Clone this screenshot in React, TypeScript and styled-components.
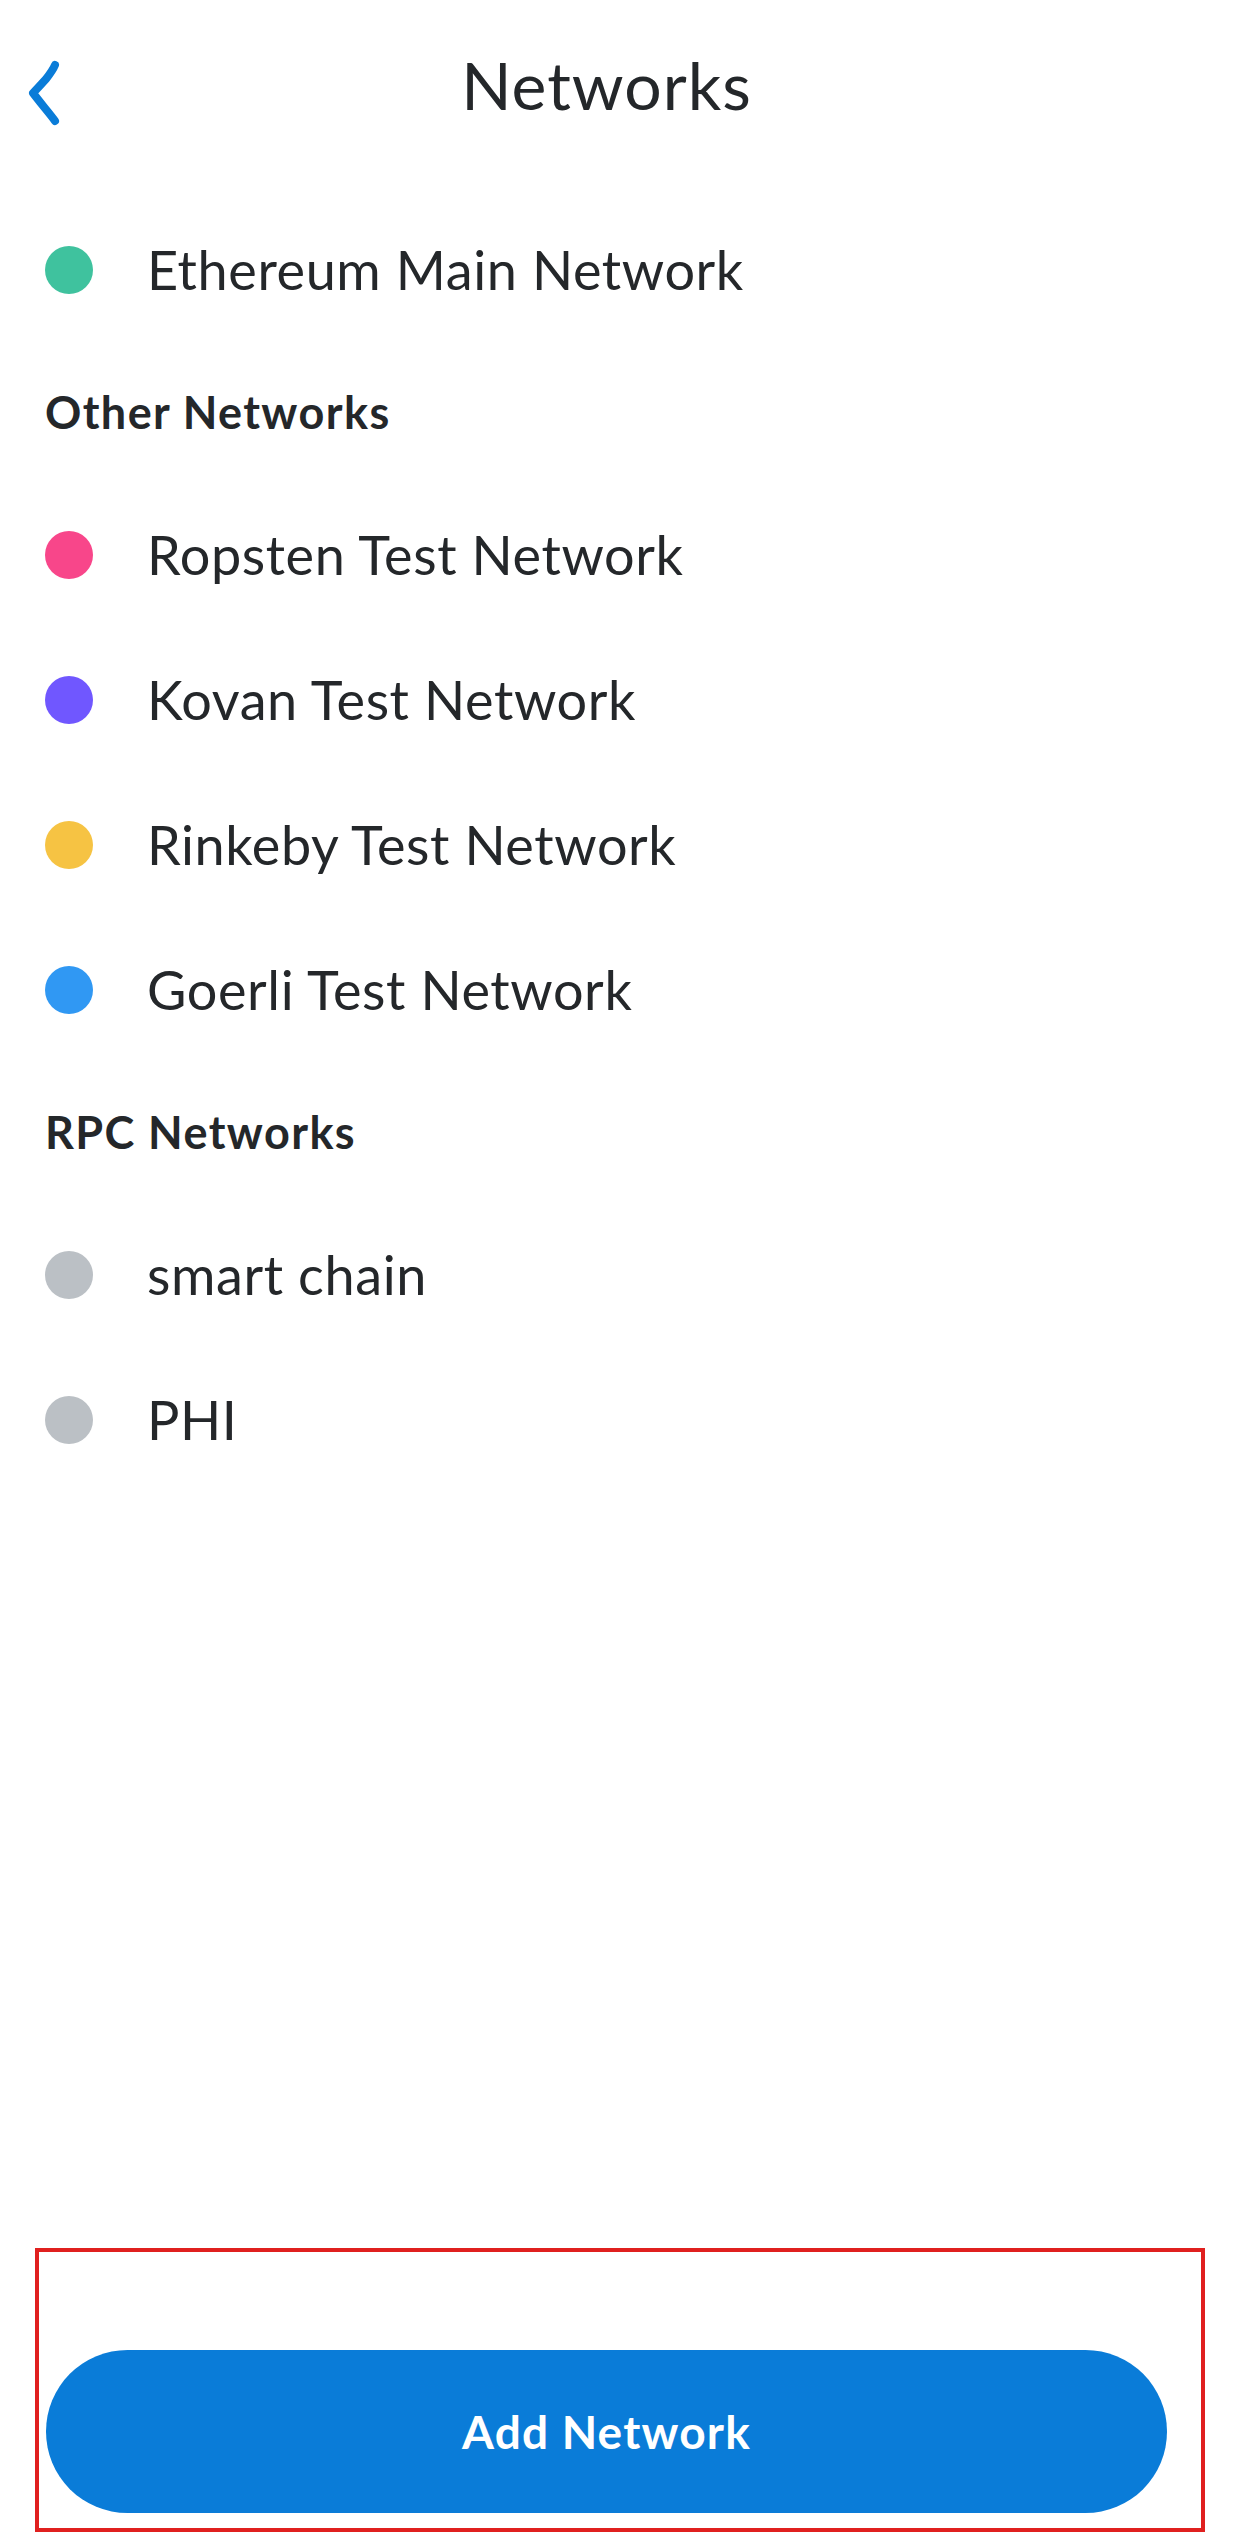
import React from "react";
import styled, { createGlobalStyle } from "styled-components";

const GlobalStyle = createGlobalStyle`
  html, body {
    margin: 0;
    padding: 0;
    background: #ffffff;
  }
  body {
    font-family: Lato, "Noto Sans", "Liberation Sans", sans-serif;
    color: #24272a;
  }
`;

const Page = styled.div`
  width: 1237px;
  min-height: 2532px;
  display: flex;
  flex-direction: column;
  background: #ffffff;
`;

const Header = styled.header`
  position: relative;
  height: 168px;
  display: flex;
  align-items: center;
  justify-content: center;
  padding-right: 24px;
`;

const BackButton = styled.button`
  position: absolute;
  left: 18px;
  top: 56px;
  width: 48px;
  height: 74px;
  padding: 0;
  border: none;
  background: transparent;
  display: flex;
  align-items: center;
  justify-content: center;
  cursor: pointer;
`;

const Title = styled.h1`
  margin: 0;
  font-family: Lato, "Noto Sans", sans-serif;
  font-weight: 400;
  font-size: 66px;
  letter-spacing: 1px;
  color: #24272a;
`;

const List = styled.div`
  display: flex;
  flex-direction: column;
  padding: 29px 0 0 45px;
`;

const Row = styled.div`
  height: 145px;
  display: flex;
  align-items: center;
  gap: 54px;
`;

const Dot = styled.span<{ $color: string }>`
  width: 48px;
  height: 48px;
  border-radius: 50%;
  background: ${(p) => p.$color};
  flex-shrink: 0;
`;

const NetworkName = styled.span`
  font-size: 54px;
  font-weight: 400;
  letter-spacing: 0.6px;
  color: #24272a;
`;

const SectionTitle = styled.div`
  height: 140px;
  display: flex;
  align-items: center;
  font-size: 45px;
  font-weight: 700;
  letter-spacing: 1.4px;
  color: #24272a;
`;

const Spacer = styled.div`
  flex: 1;
`;

const Footer = styled.footer`
  margin-left: 35px;
  width: 1170px;
  box-sizing: border-box;
  border: 4px solid #e0201f;
  padding: 98px 0 15px 7px;
`;

const AddButton = styled.button`
  width: 1121px;
  height: 163px;
  border: none;
  border-radius: 82px;
  background: #0a7cd8;
  color: #ffffff;
  font-family: Lato, "Noto Sans", sans-serif;
  font-weight: 700;
  font-size: 46px;
  letter-spacing: 1.2px;
  display: flex;
  align-items: center;
  justify-content: center;
  cursor: pointer;
`;

type Network = { name: string; color: string };

const mainNetworks: Network[] = [{ name: "Ethereum Main Network", color: "#3fc29e" }];
const otherNetworks: Network[] = [
  { name: "Ropsten Test Network", color: "#f8468a" },
  { name: "Kovan Test Network", color: "#7057ff" },
  { name: "Rinkeby Test Network", color: "#f6c343" },
  { name: "Goerli Test Network", color: "#3098f3" },
];
const rpcNetworks: Network[] = [
  { name: "smart chain", color: "#bbc0c5" },
  { name: "PHI", color: "#bbc0c5" },
];

const NetworkRow = ({ n }: { n: Network }) => (
  <Row>
    <Dot $color={n.color} />
    <NetworkName>{n.name}</NetworkName>
  </Row>
);

export default function App() {
  return (
    <>
      <GlobalStyle />
      <Page>
        <Header>
          <BackButton aria-label="Back">
            <svg width="40" height="66" viewBox="0 0 40 66" fill="none">
              <path
                d="M33 5 Q31 10 24 19 Q14 30 11 33 Q14 37 22 47 Q31 58 33 61"
                stroke="#0a7cd8"
                strokeWidth="8"
                strokeLinecap="round"
                strokeLinejoin="round"
              />
            </svg>
          </BackButton>
          <Title>Networks</Title>
        </Header>
        <List>
          {mainNetworks.map((n) => (
            <NetworkRow key={n.name} n={n} />
          ))}
          <SectionTitle>Other Networks</SectionTitle>
          {otherNetworks.map((n) => (
            <NetworkRow key={n.name} n={n} />
          ))}
          <SectionTitle>RPC Networks</SectionTitle>
          {rpcNetworks.map((n) => (
            <NetworkRow key={n.name} n={n} />
          ))}
        </List>
        <Spacer />
        <Footer>
          <AddButton>Add Network</AddButton>
        </Footer>
      </Page>
    </>
  );
}
